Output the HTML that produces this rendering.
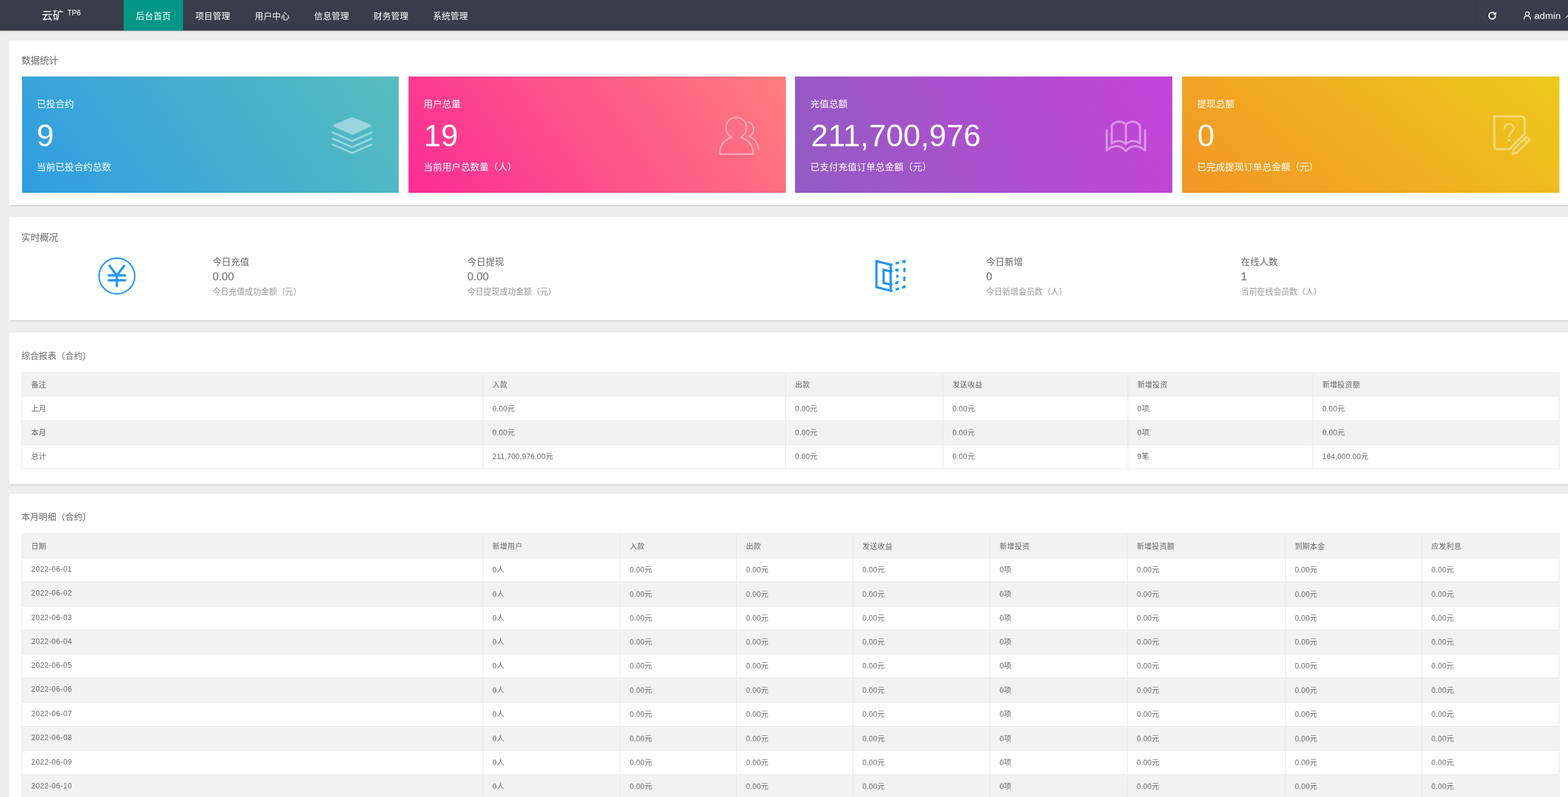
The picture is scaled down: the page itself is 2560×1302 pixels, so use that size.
<!DOCTYPE html><html lang="zh-CN"><head><meta charset="utf-8"><title>云矿 TP6</title><style>
*{box-sizing:border-box;margin:0;padding:0}
html,body{width:2560px;height:1302px;overflow:hidden;background:#eee}
body{font-family:"Liberation Sans","Noto Sans CJK SC",sans-serif;color:#666;font-size:14px;position:relative;-webkit-font-smoothing:antialiased}
#wrap{position:absolute;left:0;top:0;width:2560px;height:1302px;overflow:hidden;will-change:transform;transform:translateZ(0)}
.abs{position:absolute;white-space:nowrap}
#hd{position:absolute;left:0;top:0;width:2582px;height:50px;background:#393D49;box-shadow:0 1px 2px rgba(0,0,0,.25)}
#logo{position:absolute;left:0;top:1px;width:200px;height:50px;color:#fff;font-size:18px;line-height:50px;text-align:center}
#logo sup{font-size:12px;position:relative;top:-7.300px;vertical-align:baseline;margin-left:6px}
.nav{position:absolute;top:0;height:50px;width:97px;line-height:52px;letter-spacing:.25px;color:#fff;font-size:14px;text-align:center}
.nav.on{background:#009688}
.panel{position:absolute;left:15px;width:2552px;background:#fff;box-shadow:0 2px 3px -.5px rgba(0,0,0,.15)}
.ttl{position:absolute;left:35px;font-size:15px;line-height:20px;color:#666}
.ttl.s{font-size:14px;letter-spacing:.3px}
.card{position:absolute;top:125px;height:190px;width:616px;color:#fff}
.card .t{position:absolute;left:24px;top:34px;font-size:15px;line-height:22px;letter-spacing:.25px}
.card .n{position:absolute;left:24px;top:66.500px;font-size:50.200px;letter-spacing:.2px;line-height:60px}
.card .d{position:absolute;left:24px;top:136.500px;font-size:15px;line-height:22px;letter-spacing:.22px}
.card svg{position:absolute}
.rt .a{position:absolute;font-size:15px;line-height:20px;color:#666}
.rt .b{position:absolute;font-size:18px;line-height:20px;color:#666}
.rt .c{position:absolute;font-size:13.200px;line-height:20px;color:#999}
.tb{position:absolute;left:35px;width:2511px;border:1px solid #e6e6e6;border-top:0;border-left-color:#ededed;background:#fff}
.tr.f{border-top-color:#eaeaea}
.tr{position:absolute;left:0;width:2509px;border-top:1px solid #e6e6e6}
.tr.g{background:#f2f2f2}
.td{position:absolute;top:0;height:100%;border-right:1px solid #e6e6e6;font-size:12px;color:#666;padding-left:15px;display:flex;align-items:center;white-space:nowrap;letter-spacing:.3px}
.td span{position:relative;top:-1.200px}
.tr.f .td span{top:-.5px}
.td.dt{letter-spacing:.53px}
</style></head><body><div id="wrap">
<div id="hd"><div id="logo">云矿<sup>TP6</sup></div>
<div class="nav on" style="left:202px">后台首页</div>
<div class="nav" style="left:299px">项目管理</div>
<div class="nav" style="left:396px">用户中心</div>
<div class="nav" style="left:493px">信息管理</div>
<div class="nav" style="left:590px">财务管理</div>
<div class="nav" style="left:687px">系统管理</div>
<div class="abs" style="left:2408px;top:0;width:1px;height:50px;background:rgba(0,0,0,.06)"></div>
<div class="abs" style="left:2465px;top:0;width:1px;height:50px;background:rgba(0,0,0,.06)"></div>
<svg class="abs" style="left:2429px;top:18px" width="15" height="15" viewBox="0 0 15 15"><path d="M12.6 8.1a5.4 5.4 0 1 1-2-4.6" fill="none" stroke="#fff" stroke-width="2" stroke-linecap="round"/><path d="M8.3 5.9 13.8 1.300v5.300z" fill="#fff"/></svg>
<svg class="abs" style="left:2487px;top:18px" width="13" height="15" viewBox="0 0 13 15"><circle cx="6.5" cy="4.6" r="3.1" fill="none" stroke="#fff" stroke-width="1.3"/><path d="M1.2 13.6c0-3.4 2.2-5.6 5.3-5.6s5.3 2.2 5.3 5.6" fill="none" stroke="#fff" stroke-width="1.3" stroke-linecap="round"/></svg>
<div class="abs" style="left:2505px;top:1px;line-height:50px;font-size:15.500px;letter-spacing:.2px;color:#fff">admin</div>
<svg class="abs" style="left:2555.500px;top:23px" width="10" height="8" viewBox="0 0 10 8"><path d="M0.5 6L5 1.5 9.5 6" fill="none" stroke="#fff" stroke-width="1.1"/></svg>
</div>
<div class="panel" style="top:66px;height:269px"></div>
<div class="ttl" style="top:89px">数据统计</div>
<div class="card" style="left:36px;width:615px;background:linear-gradient(-125deg,#57bdbf,#2f9de2)"><div class="t" style="left:24px">已投合约</div><div class="n" style="left:24px">9</div><div class="d" style="left:24px">当前已投合约总数</div><svg style="left:504.600px;top:66px" width="68" height="61" viewBox="0 0 68 61" opacity=".42"><path d="M31 1.500 4.500 12.500c-2.400 1-2.400 2.500 0 3.500L31 28.200c2 .9 4 .9 6 0L63.500 16c2.400-1 2.400-2.500 0-3.500L37 1.500c-2-.9-4-.9-6 0z" fill="#fff"/><path d="M2.500 25.500 34 39.500 65.500 25.500M2.500 35.500 34 49.500 65.500 35.500M2.500 45 34 59 65.500 45" fill="none" stroke="#fff" stroke-width="3.500" stroke-linecap="round" stroke-linejoin="round"/></svg></div>
<div class="card" style="left:667px;width:616px;background:linear-gradient(-125deg,#ff7d7d,#fb2c95)"><div class="t" style="left:24.5px">用户总量</div><div class="n" style="left:25px">19</div><div class="d" style="left:24.5px">当前用户总数量（人）</div><svg style="left:473px;top:45px" width="140" height="100" viewBox="0 0 140 100" opacity=".42"><path d="M35 81.700C35 68 42 58.500 54.500 54.300C49 51 45.300 45.500 45.300 38.400C45.300 29 52.500 21.900 61.800 21.900C71.500 21.900 78.800 29 78.800 38.400C78.800 45.500 75 51 69.500 54.300C82 58.500 89.500 68 89.500 81.700Z" fill="none" stroke="#fff" stroke-width="2.500" stroke-linejoin="round"/><path d="M81.800 28.800C87 31 90.300 36 90.300 41.500C90.300 46.500 87.500 50.500 83 53.200C92 56.500 97.500 63.500 98.500 74" fill="none" stroke="#fff" stroke-width="2.500" stroke-linecap="round" stroke-linejoin="round"/></svg></div>
<div class="card" style="left:1298px;width:616px;background:linear-gradient(-113deg,#c543d8,#925cc3)"><div class="t" style="left:25px">充值总额</div><div class="n" style="left:25.9px">211,700,976</div><div class="d" style="left:25px">已支付充值订单总金额（元）</div><svg style="left:472px;top:45px" width="140" height="100" viewBox="0 0 140 100" opacity=".42"><path d="M45.100 64.500V35C49 30.500 53 28.700 56.500 28.700C61 28.700 65 30 68.200 33.200C71.400 30 75.400 28.700 79.900 28.700C83.400 28.700 87.400 30.500 91.300 35V64.500C88 61.500 84 60.500 80 60.500C75.500 60.500 71.500 62 68.200 65.500C65 62 61 60.500 56.500 60.500C52.500 60.500 48.500 61.500 45.100 64.500ZM68.200 33.200V65.500" fill="none" stroke="#fff" stroke-width="3.600" stroke-linejoin="round" stroke-linecap="round"/><path d="M36.900 43V75.700C42 71 47.500 68.700 53 68.700C59 68.700 64 71.500 68.200 76.800C72.400 71.500 77.400 68.700 83.400 68.700C88.900 68.700 94.400 71 99.500 75.700V43" fill="none" stroke="#fff" stroke-width="3.600" stroke-linejoin="round" stroke-linecap="round"/></svg></div>
<div class="card" style="left:1930px;width:616px;background:linear-gradient(-141deg,#ecca1b,#f39526)"><div class="t" style="left:24.5px">提现总额</div><div class="n" style="left:25px">0</div><div class="d" style="left:24.5px">已完成提现订单总金额（元）</div><svg style="left:470px;top:45px" width="140" height="100" viewBox="0 0 140 100" opacity=".42"><path d="M39.600 20.100H83Q89.200 20.100 89.200 26.500V48.400L64.200 73.700H45.600Q39.600 73.700 39.600 67.700Z" fill="none" stroke="#fff" stroke-width="3.400" stroke-linejoin="miter"/><path d="M56.300 40.500C56.300 35.500 59.500 32.400 64 32.400C68.300 32.400 71.200 35.300 71.200 39.200C71.200 45.500 63.700 46.500 63.700 53.200" fill="none" stroke="#fff" stroke-width="3.300" stroke-linecap="round"/><circle cx="64" cy="59.200" r="2.300" fill="#fff"/><path d="M92.500 53.400 97.500 58.800 76.400 79.400 69.600 81.300 71.600 73.800ZM88.300 57.700 93.300 63" fill="none" stroke="#fff" stroke-width="3.200" stroke-linejoin="miter"/></svg></div>
<div class="panel" style="top:355px;height:167.500px"></div>
<div class="ttl" style="top:378px">实时概况</div>
<div class="rt">
<svg class="abs" style="left:160px;top:420px" width="62" height="62" viewBox="0 0 62 62"><circle cx="30.850" cy="30.900" r="29.150" fill="none" stroke="#2196F3" stroke-width="2.300"/><path d="M19 14.300 30.700 29.800 42.700 14.300M17.500 29.800H44.200M17.500 37.800H44.200M30.700 29.800V47.400" fill="none" stroke="#2196F3" stroke-width="3.800" stroke-linecap="round" stroke-linejoin="round"/></svg>
<svg class="abs" style="left:1400px;top:410px" width="110" height="80" viewBox="0 0 110 80"><path d="M31 16.600 54.100 22.500V65L31 59.100Z" fill="none" stroke="#2196F3" stroke-width="3.600"/><path d="M54.100 33.500 42.600 30.600V52L54.100 55" fill="none" stroke="#2196F3" stroke-width="3.600"/><path d="M54.100 22.600 76.500 16.600V59.100L54.100 65.300" fill="none" stroke="#2196F3" stroke-width="3.600" stroke-dasharray="3.200 5.100 6 5.100 7.200 7.400 7.300 7.100 7.100 7 7 5.100 6 5.100 3.200 99"/><path d="M54.100 33.500 65.100 30.600V52L54.100 55" fill="none" stroke="#2196F3" stroke-width="3.600" stroke-dasharray="3.200 4.450 6.650 5.500 4.600 5.300 6.800 4.500 3.200 99"/></svg>
<div class="a" style="left:347px;top:418px">今日充值</div><div class="b" style="left:347px;top:442px">0.00</div><div class="c" style="left:347px;top:466.700px">今日充值成功金额（元）</div>
<div class="a" style="left:763px;top:418px">今日提现</div><div class="b" style="left:763px;top:442px">0.00</div><div class="c" style="left:763px;top:466.700px">今日提现成功金额（元）</div>
<div class="a" style="left:1610px;top:418px">今日新增</div><div class="b" style="left:1610px;top:442px">0</div><div class="c" style="left:1610px;top:466.700px">今日新增会员数（人）</div>
<div class="a" style="left:2026px;top:418px">在线人数</div><div class="b" style="left:2026px;top:442px">1</div><div class="c" style="left:2026px;top:466.700px">当前在线会员数（人）</div>
</div>
<div class="panel" style="top:543px;height:248px"></div>
<div class="ttl s" style="top:571px">综合报表（合约)</div>
<div class="tb" style="top:608px;height:158px">
<div class="tr g f" style="top:0px;height:39px">
<div class="td" style="left:0.0px;width:753.0px"><span>备注</span></div>
<div class="td" style="left:753.0px;width:494.0px"><span>入款</span></div>
<div class="td" style="left:1247.0px;width:257.0px"><span>出款</span></div>
<div class="td" style="left:1504.0px;width:302.0px"><span>发送收益</span></div>
<div class="td" style="left:1806.0px;width:302.0px"><span>新增投资</span></div>
<div class="td" style="left:2108.0px;width:401.0px;border-right:0"><span>新增投资额</span></div>
</div>
<div class="tr" style="top:39px;height:40px">
<div class="td" style="left:0.0px;width:753.0px"><span>上月</span></div>
<div class="td" style="left:753.0px;width:494.0px"><span>0.00元</span></div>
<div class="td" style="left:1247.0px;width:257.0px"><span>0.00元</span></div>
<div class="td" style="left:1504.0px;width:302.0px"><span>0.00元</span></div>
<div class="td" style="left:1806.0px;width:302.0px"><span>0项</span></div>
<div class="td" style="left:2108.0px;width:401.0px;border-right:0"><span>0.00元</span></div>
</div>
<div class="tr g" style="top:79px;height:39px">
<div class="td" style="left:0.0px;width:753.0px"><span>本月</span></div>
<div class="td" style="left:753.0px;width:494.0px"><span>0.00元</span></div>
<div class="td" style="left:1247.0px;width:257.0px"><span>0.00元</span></div>
<div class="td" style="left:1504.0px;width:302.0px"><span>0.00元</span></div>
<div class="td" style="left:1806.0px;width:302.0px"><span>0项</span></div>
<div class="td" style="left:2108.0px;width:401.0px;border-right:0"><span>0.00元</span></div>
</div>
<div class="tr" style="top:118px;height:39px">
<div class="td" style="left:0.0px;width:753.0px"><span>总计</span></div>
<div class="td" style="left:753.0px;width:494.0px"><span>211,700,976.00元</span></div>
<div class="td" style="left:1247.0px;width:257.0px"><span>0.00元</span></div>
<div class="td" style="left:1504.0px;width:302.0px"><span>0.00元</span></div>
<div class="td" style="left:1806.0px;width:302.0px"><span>9笔</span></div>
<div class="td" style="left:2108.0px;width:401.0px;border-right:0"><span>164,000.00元</span></div>
</div>
</div>
<div class="panel" style="top:806.500px;height:600px"></div>
<div class="ttl s" style="top:834px">本月明细（合约)</div>
<div class="tb" style="top:871px;height:474px">
<div class="tr g f" style="top:0px;height:40px">
<div class="td" style="left:0.0px;width:753.0px"><span>日期</span></div>
<div class="td" style="left:753.0px;width:224.0px"><span>新增用户</span></div>
<div class="td" style="left:977.0px;width:190.0px"><span>入款</span></div>
<div class="td" style="left:1167.0px;width:190.0px"><span>出款</span></div>
<div class="td" style="left:1357.0px;width:224.0px"><span>发送收益</span></div>
<div class="td" style="left:1581.0px;width:224.0px"><span>新增投资</span></div>
<div class="td" style="left:1805.0px;width:258.0px"><span>新增投资额</span></div>
<div class="td" style="left:2063.0px;width:223.0px"><span>到期本金</span></div>
<div class="td" style="left:2286.0px;width:223.0px;border-right:0"><span>应发利息</span></div>
</div>
<div class="tr" style="top:40px;height:39px">
<div class="td dt" style="left:0.0px;width:753.0px"><span>2022-06-01</span></div>
<div class="td" style="left:753.0px;width:224.0px"><span>0人</span></div>
<div class="td" style="left:977.0px;width:190.0px"><span>0.00元</span></div>
<div class="td" style="left:1167.0px;width:190.0px"><span>0.00元</span></div>
<div class="td" style="left:1357.0px;width:224.0px"><span>0.00元</span></div>
<div class="td" style="left:1581.0px;width:224.0px"><span>0项</span></div>
<div class="td" style="left:1805.0px;width:258.0px"><span>0.00元</span></div>
<div class="td" style="left:2063.0px;width:223.0px"><span>0.00元</span></div>
<div class="td" style="left:2286.0px;width:223.0px;border-right:0"><span>0.00元</span></div>
</div>
<div class="tr g" style="top:79px;height:40px">
<div class="td dt" style="left:0.0px;width:753.0px"><span>2022-06-02</span></div>
<div class="td" style="left:753.0px;width:224.0px"><span>0人</span></div>
<div class="td" style="left:977.0px;width:190.0px"><span>0.00元</span></div>
<div class="td" style="left:1167.0px;width:190.0px"><span>0.00元</span></div>
<div class="td" style="left:1357.0px;width:224.0px"><span>0.00元</span></div>
<div class="td" style="left:1581.0px;width:224.0px"><span>0项</span></div>
<div class="td" style="left:1805.0px;width:258.0px"><span>0.00元</span></div>
<div class="td" style="left:2063.0px;width:223.0px"><span>0.00元</span></div>
<div class="td" style="left:2286.0px;width:223.0px;border-right:0"><span>0.00元</span></div>
</div>
<div class="tr" style="top:119px;height:39px">
<div class="td dt" style="left:0.0px;width:753.0px"><span>2022-06-03</span></div>
<div class="td" style="left:753.0px;width:224.0px"><span>0人</span></div>
<div class="td" style="left:977.0px;width:190.0px"><span>0.00元</span></div>
<div class="td" style="left:1167.0px;width:190.0px"><span>0.00元</span></div>
<div class="td" style="left:1357.0px;width:224.0px"><span>0.00元</span></div>
<div class="td" style="left:1581.0px;width:224.0px"><span>0项</span></div>
<div class="td" style="left:1805.0px;width:258.0px"><span>0.00元</span></div>
<div class="td" style="left:2063.0px;width:223.0px"><span>0.00元</span></div>
<div class="td" style="left:2286.0px;width:223.0px;border-right:0"><span>0.00元</span></div>
</div>
<div class="tr g" style="top:158px;height:39px">
<div class="td dt" style="left:0.0px;width:753.0px"><span>2022-06-04</span></div>
<div class="td" style="left:753.0px;width:224.0px"><span>0人</span></div>
<div class="td" style="left:977.0px;width:190.0px"><span>0.00元</span></div>
<div class="td" style="left:1167.0px;width:190.0px"><span>0.00元</span></div>
<div class="td" style="left:1357.0px;width:224.0px"><span>0.00元</span></div>
<div class="td" style="left:1581.0px;width:224.0px"><span>0项</span></div>
<div class="td" style="left:1805.0px;width:258.0px"><span>0.00元</span></div>
<div class="td" style="left:2063.0px;width:223.0px"><span>0.00元</span></div>
<div class="td" style="left:2286.0px;width:223.0px;border-right:0"><span>0.00元</span></div>
</div>
<div class="tr" style="top:197px;height:39px">
<div class="td dt" style="left:0.0px;width:753.0px"><span>2022-06-05</span></div>
<div class="td" style="left:753.0px;width:224.0px"><span>0人</span></div>
<div class="td" style="left:977.0px;width:190.0px"><span>0.00元</span></div>
<div class="td" style="left:1167.0px;width:190.0px"><span>0.00元</span></div>
<div class="td" style="left:1357.0px;width:224.0px"><span>0.00元</span></div>
<div class="td" style="left:1581.0px;width:224.0px"><span>0项</span></div>
<div class="td" style="left:1805.0px;width:258.0px"><span>0.00元</span></div>
<div class="td" style="left:2063.0px;width:223.0px"><span>0.00元</span></div>
<div class="td" style="left:2286.0px;width:223.0px;border-right:0"><span>0.00元</span></div>
</div>
<div class="tr g" style="top:236px;height:40px">
<div class="td dt" style="left:0.0px;width:753.0px"><span>2022-06-06</span></div>
<div class="td" style="left:753.0px;width:224.0px"><span>0人</span></div>
<div class="td" style="left:977.0px;width:190.0px"><span>0.00元</span></div>
<div class="td" style="left:1167.0px;width:190.0px"><span>0.00元</span></div>
<div class="td" style="left:1357.0px;width:224.0px"><span>0.00元</span></div>
<div class="td" style="left:1581.0px;width:224.0px"><span>0项</span></div>
<div class="td" style="left:1805.0px;width:258.0px"><span>0.00元</span></div>
<div class="td" style="left:2063.0px;width:223.0px"><span>0.00元</span></div>
<div class="td" style="left:2286.0px;width:223.0px;border-right:0"><span>0.00元</span></div>
</div>
<div class="tr" style="top:276px;height:39px">
<div class="td dt" style="left:0.0px;width:753.0px"><span>2022-06-07</span></div>
<div class="td" style="left:753.0px;width:224.0px"><span>0人</span></div>
<div class="td" style="left:977.0px;width:190.0px"><span>0.00元</span></div>
<div class="td" style="left:1167.0px;width:190.0px"><span>0.00元</span></div>
<div class="td" style="left:1357.0px;width:224.0px"><span>0.00元</span></div>
<div class="td" style="left:1581.0px;width:224.0px"><span>0项</span></div>
<div class="td" style="left:1805.0px;width:258.0px"><span>0.00元</span></div>
<div class="td" style="left:2063.0px;width:223.0px"><span>0.00元</span></div>
<div class="td" style="left:2286.0px;width:223.0px;border-right:0"><span>0.00元</span></div>
</div>
<div class="tr g" style="top:315px;height:40px">
<div class="td dt" style="left:0.0px;width:753.0px"><span>2022-06-08</span></div>
<div class="td" style="left:753.0px;width:224.0px"><span>0人</span></div>
<div class="td" style="left:977.0px;width:190.0px"><span>0.00元</span></div>
<div class="td" style="left:1167.0px;width:190.0px"><span>0.00元</span></div>
<div class="td" style="left:1357.0px;width:224.0px"><span>0.00元</span></div>
<div class="td" style="left:1581.0px;width:224.0px"><span>0项</span></div>
<div class="td" style="left:1805.0px;width:258.0px"><span>0.00元</span></div>
<div class="td" style="left:2063.0px;width:223.0px"><span>0.00元</span></div>
<div class="td" style="left:2286.0px;width:223.0px;border-right:0"><span>0.00元</span></div>
</div>
<div class="tr" style="top:355px;height:39px">
<div class="td dt" style="left:0.0px;width:753.0px"><span>2022-06-09</span></div>
<div class="td" style="left:753.0px;width:224.0px"><span>0人</span></div>
<div class="td" style="left:977.0px;width:190.0px"><span>0.00元</span></div>
<div class="td" style="left:1167.0px;width:190.0px"><span>0.00元</span></div>
<div class="td" style="left:1357.0px;width:224.0px"><span>0.00元</span></div>
<div class="td" style="left:1581.0px;width:224.0px"><span>0项</span></div>
<div class="td" style="left:1805.0px;width:258.0px"><span>0.00元</span></div>
<div class="td" style="left:2063.0px;width:223.0px"><span>0.00元</span></div>
<div class="td" style="left:2286.0px;width:223.0px;border-right:0"><span>0.00元</span></div>
</div>
<div class="tr g" style="top:394px;height:39px">
<div class="td dt" style="left:0.0px;width:753.0px"><span>2022-06-10</span></div>
<div class="td" style="left:753.0px;width:224.0px"><span>0人</span></div>
<div class="td" style="left:977.0px;width:190.0px"><span>0.00元</span></div>
<div class="td" style="left:1167.0px;width:190.0px"><span>0.00元</span></div>
<div class="td" style="left:1357.0px;width:224.0px"><span>0.00元</span></div>
<div class="td" style="left:1581.0px;width:224.0px"><span>0项</span></div>
<div class="td" style="left:1805.0px;width:258.0px"><span>0.00元</span></div>
<div class="td" style="left:2063.0px;width:223.0px"><span>0.00元</span></div>
<div class="td" style="left:2286.0px;width:223.0px;border-right:0"><span>0.00元</span></div>
</div>
<div class="tr" style="top:433px;height:40px">
<div class="td dt" style="left:0.0px;width:753.0px"><span>2022-06-11</span></div>
<div class="td" style="left:753.0px;width:224.0px"><span>0人</span></div>
<div class="td" style="left:977.0px;width:190.0px"><span>0.00元</span></div>
<div class="td" style="left:1167.0px;width:190.0px"><span>0.00元</span></div>
<div class="td" style="left:1357.0px;width:224.0px"><span>0.00元</span></div>
<div class="td" style="left:1581.0px;width:224.0px"><span>0项</span></div>
<div class="td" style="left:1805.0px;width:258.0px"><span>0.00元</span></div>
<div class="td" style="left:2063.0px;width:223.0px"><span>0.00元</span></div>
<div class="td" style="left:2286.0px;width:223.0px;border-right:0"><span>0.00元</span></div>
</div>
</div>
</div></body></html>
